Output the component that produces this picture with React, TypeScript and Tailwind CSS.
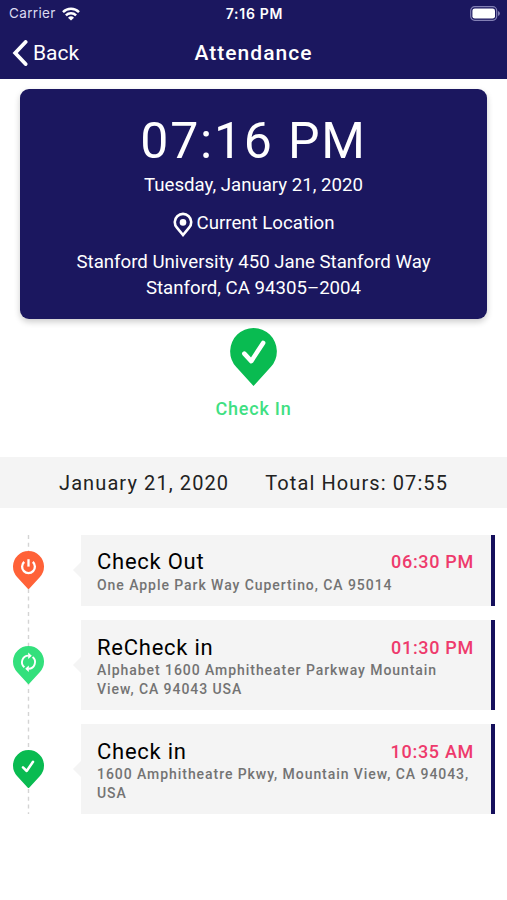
import type { ReactNode } from "react";

type Kind = "out" | "recheck" | "in";

const entries: { kind: Kind; title: string; time: string; address: string; height: string }[] = [
    {
        kind: "out",
        title: "Check Out",
        time: "06:30 PM",
        address: "One Apple Park Way Cupertino, CA 95014",
        height: "h-[71px]",
    },
    {
        kind: "recheck",
        title: "ReCheck in",
        time: "01:30 PM",
        address: "Alphabet 1600 Amphitheater Parkway Mountain View, CA 94043 USA",
        height: "h-[89.5px]",
    },
    {
        kind: "in",
        title: "Check in",
        time: "10:35 AM",
        address: "1600 Amphitheatre Pkwy, Mountain View, CA 94043, USA",
        height: "h-[89.5px]",
    },
];

function Pin({ className, children }: { className: string; children: ReactNode }) {
    return (
        <svg viewBox="0 0 31 38.5" className={className}>
            <path d="M15.5 38.5 L4.05 25.95 A15.5 15.5 0 1 1 26.95 25.95 Z" fill="currentColor" />
            <g fill="none" stroke="#fff">{children}</g>
        </svg>
    );
}

function PinIcon({ kind }: { kind: Kind }) {
    if (kind === "out") {
        return (
            <Pin className="w-[31px] h-[38.5px] text-[#ff6238]">
                <path d="M11.2 10.9 A6.4 6.4 0 1 0 19.8 10.9" strokeWidth="2.3" />
                <path d="M15.5 8.2 V15.6" strokeWidth="2.3" />
            </Pin>
        );
    }
    if (kind === "recheck") {
        return (
            <Pin className="w-[31px] h-[38.5px] text-[#33e07c]">
                <path d="M11.4 21.3 A6.6 6.6 0 0 1 15.5 9.6" strokeWidth="1.9" />
                <path d="M19.6 11.1 A6.6 6.6 0 0 1 15.5 22.8" strokeWidth="1.9" />
                <path d="M15.2 6.4 L18.8 9.7 L15.2 13 Z" fill="#fff" stroke="none" />
                <path d="M15.8 19.4 L12.2 22.7 L15.8 26 Z" fill="#fff" stroke="none" />
            </Pin>
        );
    }
    return (
        <Pin className="w-[31px] h-[38.5px] text-[#09bb51]">
            <path d="M10 17.4 L13.7 21 L20 11.8" strokeWidth="2.5" strokeLinecap="round" strokeLinejoin="round" />
        </Pin>
    );
}

function StatusBar() {
    return (
        <div className="grid grid-cols-3 items-center h-[27px] pl-[9px] pr-[7px] font-['Inter',sans-serif]">
            <div className="flex items-center gap-[6px]">
                <span className="text-[13.5px] tracking-[0.35px] text-[#dcdaf0]">Carrier</span>
                <svg viewBox="0 0 18 14" className="w-[18px] h-[14px]" fill="none" stroke="#fff" strokeWidth="2.5">
                    <path d="M1 5.1 A11.4 11.4 0 0 1 17 5.1" />
                    <path d="M3.9 8.4 A7.3 7.3 0 0 1 14.1 8.4" />
                    <path d="M9 13.6 L6 10.7 A4.3 4.3 0 0 1 12 10.7 Z" fill="#fff" stroke="none" />
                </svg>
            </div>
            <span className="text-center text-[14px] font-semibold tracking-[0.7px] text-white">7:16 PM</span>
            <svg viewBox="0 0 30 15" className="w-[30px] h-[15px] justify-self-end">
                <rect x="0.7" y="0.7" width="26" height="13.6" rx="4" fill="none" stroke="#8380b5" strokeWidth="1.2" />
                <rect x="2.4" y="2.4" width="22.6" height="10.2" rx="2.4" fill="#fff" />
                <path d="M28 5 A2.6 2.6 0 0 1 28 10 Z" fill="#8380b5" />
            </svg>
        </div>
    );
}

function Header() {
    return (
        <header className="h-[79px] bg-[#1b175f] text-white">
            <StatusBar />
            <div className="grid grid-cols-3 items-center h-[52px] px-3">
                <div className="flex items-center gap-[5px]">
                    <svg viewBox="0 0 16 26" className="w-[16px] h-[26px]" fill="none" stroke="#fff" strokeWidth="3.8">
                        <path d="M13.6 2 L3.2 13 L13.6 24" strokeLinecap="round" />
                    </svg>
                    <span className="pt-[2px] text-[21px]">Back</span>
                </div>
                <h1 className="pt-[2px] text-center text-[21px] font-medium tracking-[1.05px] whitespace-nowrap">Attendance</h1>
            </div>
        </header>
    );
}

function LocationCard() {
    return (
        <section className="flex flex-col items-center h-[230px] mx-5 mt-[10px] pt-[22px] rounded-[9px] bg-[#1b175f] text-white text-[18.65px] shadow-[0_3px_6px_rgba(0,0,0,0.2)]">
            <p className="text-[50px] leading-[60px] tracking-[1.8px]">07:16 PM</p>
            <p className="leading-[28px]">Tuesday, January 21, 2020</p>
            <div className="flex items-center gap-1 mt-[11px] h-7">
                <svg viewBox="0 0 20 25" className="w-[20px] h-[25px]" fill="none" stroke="#fff">
                    <path d="M10 23 L3.9 15.6 A8.2 8.2 0 1 1 16.1 15.6 Z" strokeWidth="2.6" />
                    <circle cx="10" cy="10.4" r="3.3" fill="#fff" stroke="none" />
                </svg>
                <span>Current Location</span>
            </div>
            <p className="mt-[11px] text-center leading-[26px]">
                Stanford University 450 Jane Stanford Way
                <br />
                Stanford, CA 94305–2004
            </p>
        </section>
    );
}

function TimelineRow({ entry }: { entry: (typeof entries)[number] }) {
    return (
        <li className={`flex items-center ${entry.height}`}>
            <div className="relative w-[73px] pl-[13px]">
                <PinIcon kind={entry.kind} />
            </div>
            <svg viewBox="0 0 8 16" className="w-2 h-4">
                <path d="M0 8 L8 0 V16 Z" fill="#f4f4f4" />
            </svg>
            <div className="w-[414px] h-full pl-[16px] pr-[17px] pt-[13.5px] bg-[#f4f4f4] border-r-4 border-[#150f5c]">
                <div className="flex items-center justify-between h-[27px]">
                    <h2 className="text-[22px] tracking-[0.75px] text-black">{entry.title}</h2>
                    <span className="text-[18px] font-medium tracking-[0.7px] text-[#ee3a6c]">{entry.time}</span>
                </div>
                <p className="w-[378px] pt-[0.5px] text-[14px] font-medium leading-[18.5px] tracking-[0.94px] text-[#737373]">{entry.address}</p>
            </div>
        </li>
    );
}

function App() {
    return (
        <div className="w-[507px] h-[900px] overflow-hidden bg-white font-['Roboto',sans-serif]">
            <Header />
            <LocationCard />
            <div className="flex flex-col items-center mt-[9px]">
                <Pin className="w-[47px] h-[58px] text-[#09bb51]">
                    <path d="M9.4 17 L14 22 L21.9 9.9" strokeWidth="3" strokeLinecap="round" strokeLinejoin="round" />
                </Pin>
                <span className="mt-[10px] text-[18px] leading-[26px] font-medium tracking-[0.8px] text-[#3fe082]">Check In</span>
            </div>
            <div className="flex items-center h-[51px] mt-[35px] pl-[59px] gap-9 bg-[#f4f4f4] text-[20px] tracking-[1.1px] text-[#222]">
                <span>January 21, 2020</span>
                <span>Total Hours: 07:55</span>
            </div>
            <ul className="relative flex flex-col gap-[14.5px] mt-[26.5px]">
                <svg className="absolute left-[27px] top-0 w-[3px] h-[279px]">
                    <path d="M1.5 0 V279" stroke="#d4d4d4" strokeWidth="1.4" strokeDasharray="4 3.7" />
                </svg>
                {entries.map((entry) => (
                    <TimelineRow key={entry.kind} entry={entry} />
                ))}
            </ul>
        </div>
    );
}

export default App;
